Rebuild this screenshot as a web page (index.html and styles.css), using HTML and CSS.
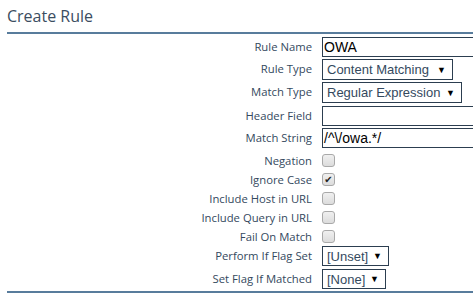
FILE: index.html
```html
<!DOCTYPE html>
<html>
<head>
<meta charset="utf-8">
<link rel="stylesheet" href="styles.css">
</head>
<body>
<div class="panel">
  <h1 class="title">Create Rule</h1>
  <div class="form">
    <label class="lbl">Rule Name</label>
    <div class="ctl"><div class="text">OWA</div></div>

    <label class="lbl">Rule Type</label>
    <div class="ctl"><div class="select w-ct"><span>Content Matching</span><span class="arrow">▼</span></div></div>

    <label class="lbl">Match Type</label>
    <div class="ctl"><div class="select w-re"><span>Regular Expression</span><span class="arrow">▼</span></div></div>

    <label class="lbl">Header Field</label>
    <div class="ctl"><div class="text"></div></div>

    <label class="lbl">Match String</label>
    <div class="ctl"><div class="text">/^\/owa.*/</div></div>

    <label class="lbl lbl-cb">Negation</label>
    <div class="ctl ctl-cb"><span class="cb"></span></div>

    <label class="lbl lbl-cb">Ignore Case</label>
    <div class="ctl ctl-cb"><span class="cb"><span class="tick">✔</span></span></div>

    <label class="lbl lbl-cb">Include Host in URL</label>
    <div class="ctl ctl-cb"><span class="cb"></span></div>

    <label class="lbl lbl-cb">Include Query in URL</label>
    <div class="ctl ctl-cb"><span class="cb"></span></div>

    <label class="lbl lbl-cb">Fail On Match</label>
    <div class="ctl ctl-cb"><span class="cb"></span></div>

    <label class="lbl">Perform If Flag Set</label>
    <div class="ctl"><div class="select w-un"><span>[Unset]</span><span class="arrow">▼</span></div></div>

    <label class="lbl">Set Flag If Matched</label>
    <div class="ctl"><div class="select w-no"><span>[None]</span><span class="arrow">▼</span></div></div>
  </div>
</div>
</body>
</html>
```

FILE: styles.css
```css
html, body {
  margin: 0;
  padding: 0;
  background: #ffffff;
  overflow: hidden;
}
body {
  padding-left: 7px;
  font-family: "Open Sans", "DejaVu Sans", sans-serif;
}
.panel {
  width: 466px;
  border-bottom: 2px solid #587c9c;
  padding-bottom: 1px;
}
.title {
  margin: 0;
  padding-top: 6px;
  height: 26px;
  font-size: 16px;
  font-weight: normal;
  line-height: 20px;
  color: #3b4d61;
  border-bottom: 2px solid #587c9c;
  box-sizing: content-box;
}
.form {
  display: grid;
  grid-template-columns: 305px 1fr;
  column-gap: 10px;
  grid-template-rows: 22px 23px 24px 22px 23px 19px 19px 19px 19px 19px 23px 21px;
  padding-top: 3px;
}
.lbl {
  align-self: start;
  text-align: right;
  font-size: 11.3px;
  line-height: 20px;
  height: 20px;
  color: #34495e;
  white-space: nowrap;
}
.lbl-cb {
  line-height: 19px;
  height: 19px;
}
.ctl {
  align-self: start;
  display: flex;
  min-width: 0;
  overflow: hidden;
}
.ctl-cb {
  padding-top: 3px;
}
.text {
  box-sizing: border-box;
  flex: none;
  width: 170px;
  height: 20px;
  border: 1px solid #2c3e50;
  font-family: "Liberation Sans", Arial, sans-serif;
  font-size: 14px;
  line-height: 18px;
  padding-left: 1px;
  color: #000000;
  white-space: nowrap;
}
.select {
  box-sizing: border-box;
  flex: none;
  height: 21px;
  border: 1px solid #2c3e50;
  display: flex;
  align-items: center;
  justify-content: space-between;
  padding: 0 6px 0 4px;
  font-family: "Liberation Sans", Arial, sans-serif;
  font-size: 13px;
  color: #34495e;
  white-space: nowrap;
}
.arrow {
  font-size: 9px;
  color: #000000;
}
.w-ct { width: 131px; }
.w-re { width: 140px; }
.w-un { width: 67px; height: 20px; }
.w-no { width: 64px; height: 20px; }
.cb {
  box-sizing: border-box;
  width: 13px;
  height: 13px;
  border: 1px solid #a9a9a9;
  border-radius: 3px;
  background: linear-gradient(#f0f0f0, #dcdcdc);
  display: flex;
  align-items: center;
  justify-content: center;
}
.tick {
  font-size: 10px;
  line-height: 10px;
  color: #222222;
  font-family: "DejaVu Sans", sans-serif;
}
```
